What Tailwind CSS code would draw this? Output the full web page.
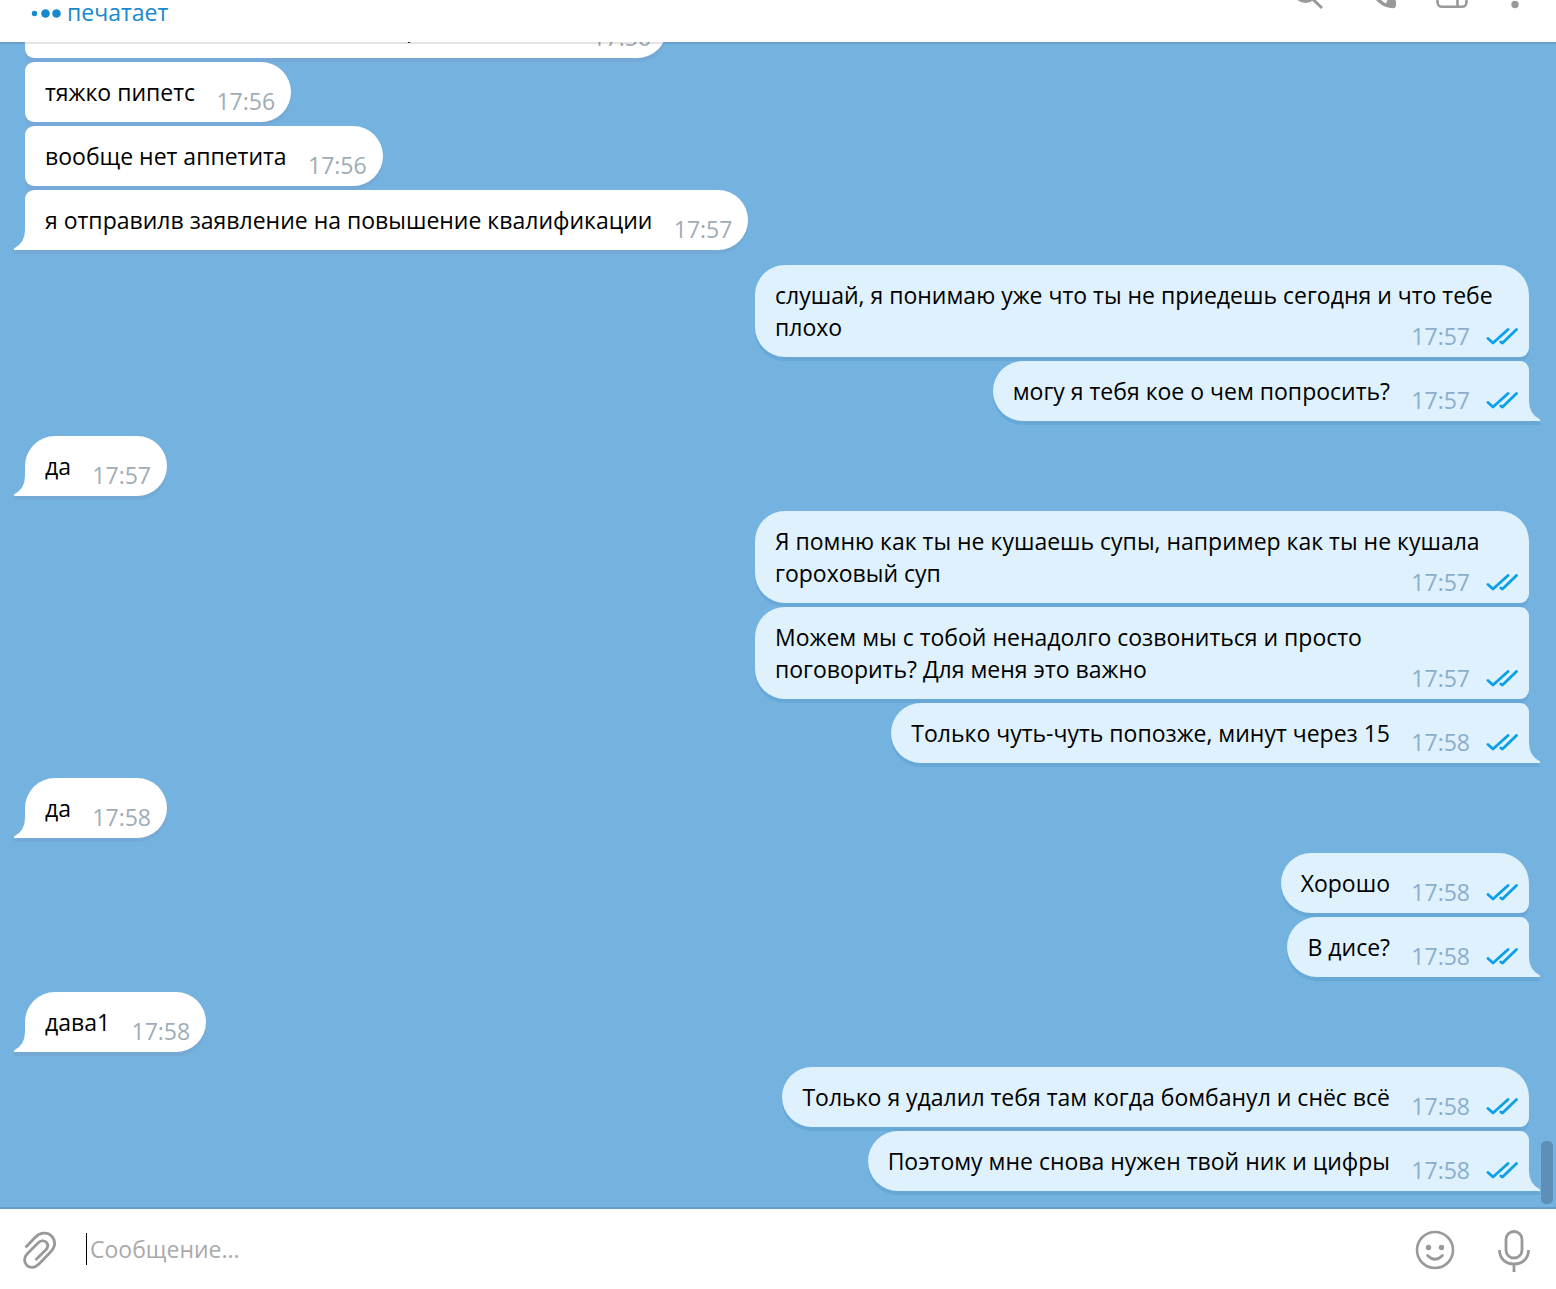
<!DOCTYPE html>
<html lang="ru">
<head>
  <meta charset="UTF-8">
  <meta name="viewport" content="width=device-width, initial-scale=1">
  <title>Чат</title>
  <script src="https://cdn.jsdelivr.net/npm/@tailwindcss/browser@4"></script>
</head>
<body class="h-screen flex flex-col overflow-hidden bg-white font-['Open_Sans',sans-serif] text-[23px] leading-8 text-black">

  <!-- Shared shapes -->
  <svg class="hidden">
    <symbol id="ticks" viewBox="0 0 32 20">
      <path d="M2 12.500L7 17L22 3.500M14.800 16L16.500 17L30.500 3.500" fill="none" stroke="#0d9fe8" stroke-width="2.800" stroke-linecap="round" stroke-linejoin="round"/>
    </symbol>
    <symbol id="tail-in" viewBox="0 0 12 24">
      <path d="M11 4V24H0V22Q10 17 11 4Z" fill="#74aad5"/>
      <path d="M12 0H11Q11 13 0 18.500V20H12Z" fill="#fff"/>
    </symbol>
    <symbol id="tail-out" viewBox="0 0 12 24">
      <path d="M1 4V24H12V22Q2 17 1 4Z" fill="#67a8d7"/>
      <path d="M0 0H1Q1 13 12 18.500V20H0Z" fill="#def1fd"/>
    </symbol>
  </svg>

  <header class="h-[42px] shrink-0 flex items-end justify-between overflow-hidden pl-[30px] pr-[10px] pb-[14px]">
    <p class="flex items-center gap-[5px] text-[#168acd]">
      <svg class="w-8 h-8" viewBox="0 0 32 32" fill="#168acd">
        <circle cx="4.500" cy="17.500" r="2.700"/>
        <circle cx="15.500" cy="17.500" r="4.300"/>
        <circle cx="26.500" cy="17.500" r="4.300"/>
      </svg>
      печатает
    </p>
    <div class="flex gap-[33px] text-[#999]">
      <button type="button" aria-label="Поиск">
        <svg class="w-10 h-10" viewBox="0 0 40 40" fill="none" stroke="currentColor" stroke-width="3">
          <circle cx="18.500" cy="2.500" r="11"/>
          <path d="M26 11.500L35 20"/>
        </svg>
      </button>
      <button type="button" aria-label="Позвонить">
        <svg class="w-10 h-10" viewBox="0 0 40 40" fill="currentColor">
          <path d="M7 -8C8 4 18 20 33 20.300C35 20.500 36 19 36 17V13.500C36 12.500 35.500 12 34.500 11.700L29.500 10.500C28.500 10.300 28 11 27.500 12L26 15.500C22 13.500 18 9 16 5Z"/>
        </svg>
      </button>
      <button type="button" aria-label="Боковая панель">
        <svg class="w-10 h-10" viewBox="0 0 40 40" fill="none" stroke="currentColor" stroke-width="2.600">
          <rect x="4.500" y="-8" width="29" height="26.800" rx="4.500"/>
          <path d="M24.500 -7V19"/>
        </svg>
      </button>
      <button type="button" aria-label="Меню">
        <svg class="w-10 h-10" viewBox="0 0 40 40" fill="currentColor">
          <circle cx="9" cy="-8" r="3.700"/>
          <circle cx="9" cy="4" r="3.700"/>
          <circle cx="9" cy="16.500" r="3.700"/>
        </svg>
      </button>
    </div>
  </header>

  <main class="relative flex-1 min-h-0 flex flex-col justify-end gap-[15px] overflow-hidden bg-[#74b2df] pl-[25px] pr-[27px] pb-[18px]">

    <div class="flex flex-col items-start gap-1">
      <div class="relative w-[642px] bg-white rounded-[30px] rounded-l-[9px] px-5 py-[14px] shadow-[0_4px_#74aad5]">
        <p class="pl-[361px]">р</p>
        <span class="absolute right-4 bottom-[5px] text-[#a0acb6]">17:56</span>
      </div>
      <div class="relative bg-white rounded-[30px] rounded-l-[9px] px-5 py-[14px] shadow-[0_4px_#74aad5]">
        <p>тяжко пипетс<span class="inline-block w-[76px]"></span></p>
        <span class="absolute right-4 bottom-[5px] text-[#a0acb6]">17:56</span>
      </div>
      <div class="relative bg-white rounded-[30px] rounded-l-[9px] px-5 py-[14px] shadow-[0_4px_#74aad5]">
        <p>вообще нет аппетита<span class="inline-block w-[76px]"></span></p>
        <span class="absolute right-4 bottom-[5px] text-[#a0acb6]">17:56</span>
      </div>
      <div class="relative bg-white rounded-[30px] rounded-tl-[9px] rounded-bl-none px-5 py-[14px] shadow-[0_4px_#74aad5]">
        <p>я отправилв заявление на повышение квалификации<span class="inline-block w-[76px]"></span></p>
        <span class="absolute right-4 bottom-[5px] text-[#a0acb6]">17:57</span>
        <svg class="absolute -left-[11px] -bottom-1 w-3 h-6"><use href="#tail-in"/></svg>
      </div>
    </div>

    <div class="flex flex-col items-end gap-1">
      <div class="relative max-w-[774px] bg-[#def1fd] rounded-[30px] rounded-br-[9px] px-5 py-[14px] shadow-[0_4px_#67a8d7]">
        <p>слушай, я понимаю уже что ты не приедешь сегодня и что тебе плохо<span class="inline-block w-[119px]"></span></p>
        <span class="absolute right-[11px] bottom-[5px] flex items-center gap-4 text-[#8aaecb]">17:57 <svg class="w-8 h-5"><use href="#ticks"/></svg></span>
      </div>
      <div class="relative max-w-[774px] bg-[#def1fd] rounded-[30px] rounded-tr-[9px] rounded-br-none px-5 py-[14px] shadow-[0_4px_#67a8d7]">
        <p>могу я тебя кое о чем попросить?<span class="inline-block w-[119px]"></span></p>
        <span class="absolute right-[11px] bottom-[5px] flex items-center gap-4 text-[#8aaecb]">17:57 <svg class="w-8 h-5"><use href="#ticks"/></svg></span>
        <svg class="absolute -right-[11px] -bottom-1 w-3 h-6"><use href="#tail-out"/></svg>
      </div>
    </div>

    <div class="flex flex-col items-start gap-1">
      <div class="relative bg-white rounded-[30px] rounded-bl-none px-5 py-[14px] shadow-[0_4px_#74aad5]">
        <p>да<span class="inline-block w-[76px]"></span></p>
        <span class="absolute right-4 bottom-[5px] text-[#a0acb6]">17:57</span>
        <svg class="absolute -left-[11px] -bottom-1 w-3 h-6"><use href="#tail-in"/></svg>
      </div>
    </div>

    <div class="flex flex-col items-end gap-1">
      <div class="relative max-w-[774px] bg-[#def1fd] rounded-[30px] rounded-br-[9px] px-5 py-[14px] shadow-[0_4px_#67a8d7]">
        <p>Я помню как ты не кушаешь супы, например как ты не кушала гороховый суп<span class="inline-block w-[119px]"></span></p>
        <span class="absolute right-[11px] bottom-[5px] flex items-center gap-4 text-[#8aaecb]">17:57 <svg class="w-8 h-5"><use href="#ticks"/></svg></span>
      </div>
      <div class="relative max-w-[774px] bg-[#def1fd] rounded-[30px] rounded-r-[9px] px-5 py-[14px] shadow-[0_4px_#67a8d7]">
        <p>Можем мы с тобой ненадолго созвониться и просто поговорить? Для меня это важно<span class="inline-block w-[119px]"></span></p>
        <span class="absolute right-[11px] bottom-[5px] flex items-center gap-4 text-[#8aaecb]">17:57 <svg class="w-8 h-5"><use href="#ticks"/></svg></span>
      </div>
      <div class="relative max-w-[774px] bg-[#def1fd] rounded-[30px] rounded-tr-[9px] rounded-br-none px-5 py-[14px] shadow-[0_4px_#67a8d7]">
        <p>Только чуть-чуть попозже, минут через 15<span class="inline-block w-[119px]"></span></p>
        <span class="absolute right-[11px] bottom-[5px] flex items-center gap-4 text-[#8aaecb]">17:58 <svg class="w-8 h-5"><use href="#ticks"/></svg></span>
        <svg class="absolute -right-[11px] -bottom-1 w-3 h-6"><use href="#tail-out"/></svg>
      </div>
    </div>

    <div class="flex flex-col items-start gap-1">
      <div class="relative bg-white rounded-[30px] rounded-bl-none px-5 py-[14px] shadow-[0_4px_#74aad5]">
        <p>да<span class="inline-block w-[76px]"></span></p>
        <span class="absolute right-4 bottom-[5px] text-[#a0acb6]">17:58</span>
        <svg class="absolute -left-[11px] -bottom-1 w-3 h-6"><use href="#tail-in"/></svg>
      </div>
    </div>

    <div class="flex flex-col items-end gap-1">
      <div class="relative max-w-[774px] bg-[#def1fd] rounded-[30px] rounded-br-[9px] px-5 py-[14px] shadow-[0_4px_#67a8d7]">
        <p>Хорошо<span class="inline-block w-[119px]"></span></p>
        <span class="absolute right-[11px] bottom-[5px] flex items-center gap-4 text-[#8aaecb]">17:58 <svg class="w-8 h-5"><use href="#ticks"/></svg></span>
      </div>
      <div class="relative max-w-[774px] bg-[#def1fd] rounded-[30px] rounded-tr-[9px] rounded-br-none px-5 py-[14px] shadow-[0_4px_#67a8d7]">
        <p>В дисе?<span class="inline-block w-[119px]"></span></p>
        <span class="absolute right-[11px] bottom-[5px] flex items-center gap-4 text-[#8aaecb]">17:58 <svg class="w-8 h-5"><use href="#ticks"/></svg></span>
        <svg class="absolute -right-[11px] -bottom-1 w-3 h-6"><use href="#tail-out"/></svg>
      </div>
    </div>

    <div class="flex flex-col items-start gap-1">
      <div class="relative bg-white rounded-[30px] rounded-bl-none px-5 py-[14px] shadow-[0_4px_#74aad5]">
        <p>дава1<span class="inline-block w-[76px]"></span></p>
        <span class="absolute right-4 bottom-[5px] text-[#a0acb6]">17:58</span>
        <svg class="absolute -left-[11px] -bottom-1 w-3 h-6"><use href="#tail-in"/></svg>
      </div>
    </div>

    <div class="flex flex-col items-end gap-1">
      <div class="relative max-w-[774px] bg-[#def1fd] rounded-[30px] rounded-br-[9px] px-5 py-[14px] shadow-[0_4px_#67a8d7]">
        <p>Только я удалил тебя там когда бомбанул и снёс всё<span class="inline-block w-[119px]"></span></p>
        <span class="absolute right-[11px] bottom-[5px] flex items-center gap-4 text-[#8aaecb]">17:58 <svg class="w-8 h-5"><use href="#ticks"/></svg></span>
      </div>
      <div class="relative max-w-[774px] bg-[#def1fd] rounded-[30px] rounded-tr-[9px] rounded-br-none px-5 py-[14px] shadow-[0_4px_#67a8d7]">
        <p>Поэтому мне снова нужен твой ник и цифры<span class="inline-block w-[119px]"></span></p>
        <span class="absolute right-[11px] bottom-[5px] flex items-center gap-4 text-[#8aaecb]">17:58 <svg class="w-8 h-5"><use href="#ticks"/></svg></span>
        <svg class="absolute -right-[11px] -bottom-1 w-3 h-6"><use href="#tail-out"/></svg>
      </div>
    </div>

    <!-- Edge lines and scrollbar -->
    <div class="absolute inset-0 border-y-2 border-black/10 pointer-events-none"></div>
    <div class="absolute right-[3px] bottom-[5px] w-3 h-[63px] rounded-[5px] bg-[#5e90b7]"></div>
  </main>

  <form class="h-20 shrink-0 flex items-center pl-5 pr-[22px] text-[#999]">
    <button type="button" aria-label="Прикрепить файл">
      <svg class="w-10 h-12" viewBox="0 0 40 48" fill="none" stroke="currentColor" stroke-width="2.800">
        <path d="M5.500 22.500L15 12.500C19.500 7.500 27 6.500 31.500 11C36 15.500 35.500 22 31 26.500L19 39C15 43 10 43.300 7 40.500C3.800 37.500 3.500 32.500 7.500 28.500L18 18C20.500 15.500 24 15 26.200 17.200C28.500 19.500 28 22.500 25.500 25.200L15.500 35"/>
      </svg>
    </button>
    <span class="ml-[26px] w-px h-8 bg-black"></span>
    <input type="text" aria-label="Сообщение" placeholder="Сообщение..." class="flex-1 min-w-0 ml-[3px] h-8 outline-none caret-transparent text-black placeholder:text-[#aaa]">
    <button type="button" aria-label="Эмодзи" class="mr-[39px]">
      <svg class="w-10 h-12" viewBox="0 0 40 48" fill="none" stroke="currentColor" stroke-width="2.600">
        <circle cx="20" cy="25" r="18"/>
        <circle cx="13.500" cy="22.500" r="2.700" fill="currentColor" stroke="none"/>
        <circle cx="26.500" cy="22.500" r="2.700" fill="currentColor" stroke="none"/>
        <path d="M12.500 30.500Q20 38 27.500 30.500" stroke-linecap="round"/>
      </svg>
    </button>
    <button type="button" aria-label="Голосовое сообщение">
      <svg class="w-10 h-12" viewBox="0 0 40 48" fill="none" stroke="currentColor" stroke-width="2.800">
        <rect x="12" y="6.500" width="16" height="26.500" rx="8"/>
        <path d="M5.500 25C5.500 34 12 39 20 39S34.500 34 34.500 25M20 39V47"/>
      </svg>
    </button>
  </form>

</body>
</html>
